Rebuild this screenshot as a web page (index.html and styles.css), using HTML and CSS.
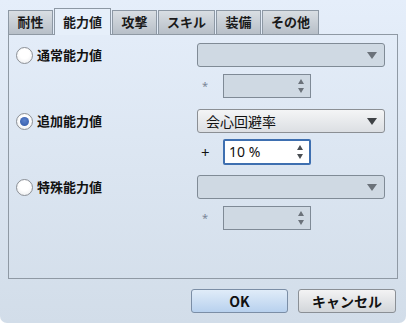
FILE: index.html
```html
<!DOCTYPE html>
<html lang="ja">
<head>
    <meta charset="UTF-8">
    <title>能力値</title>
    <link rel="stylesheet" href="styles.css">
</head>
<body>
    <div class="window">
        <div class="tabs">
            <div class="tab tab-w1">耐性</div>
            <div class="tab tab-w2 active">能力値</div>
            <div class="tab tab-w1">攻撃</div>
            <div class="tab tab-w2">スキル</div>
            <div class="tab tab-w1">装備</div>
            <div class="tab tab-w2">その他</div>
        </div>

        <div class="panel">
            <!-- 通常能力値 -->
            <div class="group">
                <label class="radio-label"><span class="radio"></span>通常能力値</label>
                <div class="select disabled"><span class="select-text"></span><span class="arrow"></span></div>
                <div class="amount">
                    <span class="sign star">*</span>
                    <div class="spinner disabled"><span class="spin-text"></span><span class="spin-btns"><i class="up"></i><i class="down"></i></span></div>
                </div>
            </div>

            <!-- 追加能力値 -->
            <div class="group">
                <label class="radio-label"><span class="radio checked"></span>追加能力値</label>
                <div class="select"><span class="select-text">会心回避率</span><span class="arrow"></span></div>
                <div class="amount">
                    <span class="sign">+</span>
                    <div class="spinner focused"><span class="spin-text">10 %</span><span class="spin-btns"><i class="up"></i><i class="down"></i></span></div>
                </div>
            </div>

            <!-- 特殊能力値 -->
            <div class="group">
                <label class="radio-label"><span class="radio"></span>特殊能力値</label>
                <div class="select disabled"><span class="select-text"></span><span class="arrow"></span></div>
                <div class="amount">
                    <span class="sign star">*</span>
                    <div class="spinner disabled"><span class="spin-text"></span><span class="spin-btns"><i class="up"></i><i class="down"></i></span></div>
                </div>
            </div>
        </div>

        <div class="buttons">
            <button class="btn ok-btn">OK</button>
            <button class="btn cancel-btn">キャンセル</button>
        </div>
    </div>
</body>
</html>
```

FILE: styles.css
```css
* { margin: 0; padding: 0; box-sizing: border-box; }
body { background: #ffffff; font-family: "Noto Sans", "Noto Sans CJK JP", sans-serif; color: #111; }
.window { width: 406px; height: 323px; padding: 8px 8px 0 8px; background: linear-gradient(#e5eefa, #d2dde9); border-radius: 0 0 7px 7px; }

/* tabs */
.tabs { display: flex; align-items: flex-end; gap: 1px; height: 26px; position: relative; z-index: 1; }
.tab { height: 24px; border: 1px solid #8d98a4; border-bottom: none; background: linear-gradient(#d9dee3, #b7bfc8); font-family: "Noto Sans CJK JP", sans-serif; font-size: 13px; font-weight: bold; line-height: 22px; text-align: center; color: #1a1a1a; }
.tab-w1 { width: 45px; }
.tab-w2 { width: 57px; }
.tab.active { height: 27px; margin-bottom: -1px; background: #e6effa; line-height: 26px; }

/* panel */
.panel { height: 245px; border: 1px solid #8f99a4; padding: 8px 12px 0 7px; }
.group { display: grid; grid-template-columns: 1fr 188px; grid-template-rows: 24px 24px; row-gap: 7px; margin-bottom: 11px; }
.radio-label { display: flex; align-items: center; gap: 4px; font-family: "Noto Sans CJK JP", sans-serif; font-size: 13px; font-weight: bold; line-height: 24px; }
.radio { width: 17px; height: 17px; border-radius: 50%; border: 1px solid #8c9096; background: radial-gradient(circle at 50% 40%, #ffffff 40%, #e6e8eb 100%); display: flex; align-items: center; justify-content: center; }
.radio.checked::after { content: ""; width: 9px; height: 9px; border-radius: 50%; background: radial-gradient(circle at 50% 40%, #5b82cc, #2f56a6); }

.select { grid-column: 2; display: flex; align-items: center; justify-content: space-between; height: 24px; border: 1px solid #8b8f94; border-radius: 3px; background: linear-gradient(#f4f5f6, #dcdfe3); padding: 0 7px 0 8px; font-family: "Noto Sans CJK JP", sans-serif; font-size: 14px; line-height: 22px; }
.select.disabled { background: #cfd9e3; border-color: #808b96; }
.arrow { width: 0; height: 0; border-left: 5px solid transparent; border-right: 5px solid transparent; border-top: 7px solid #3f4245; }
.select.disabled .arrow { border-top-color: #6b727a; }

.amount { grid-column: 2; display: flex; align-items: center; }
.sign { width: 26px; padding-left: 4px; font-size: 15px; line-height: 24px; }
.star { font-size: 11px; color: #7a8697; padding-left: 5px; }
.spinner { width: 88px; height: 24px; border: 1px solid #7f8a96; background: #cfd9e3; display: flex; align-items: center; justify-content: space-between; padding: 0 6px 0 5px; }
.spinner.focused { background: #ffffff; border: 2px solid #3e6fb0; border-radius: 2px; height: 26px; padding-left: 4px; }
.spin-text { font-size: 14px; line-height: 20px; }
.spin-btns { display: flex; flex-direction: column; align-items: center; gap: 4px; }
.spin-btns i { width: 0; height: 0; border-left: 3.5px solid transparent; border-right: 3.5px solid transparent; }
.spin-btns .up { border-bottom: 5px solid #4a4e53; }
.spin-btns .down { border-top: 5px solid #4a4e53; }
.spinner.disabled .up { border-bottom-color: #6b727a; }
.spinner.disabled .down { border-top-color: #6b727a; }

/* buttons */
.buttons { display: flex; justify-content: flex-end; gap: 10px; margin-top: 10px; padding-right: 2px; }
.btn { height: 24px; border-radius: 3px; font-family: "Noto Sans CJK JP", sans-serif; font-size: 14px; font-weight: bold; line-height: 22px; color: #111; }
.ok-btn { width: 97px; border: 1px solid #7b8ea6; background: linear-gradient(#e0ecf9, #b8d1ee); }
.cancel-btn { width: 98px; border: 1px solid #8a8f95; background: linear-gradient(#f3f3f4, #d2d6da); }
```
